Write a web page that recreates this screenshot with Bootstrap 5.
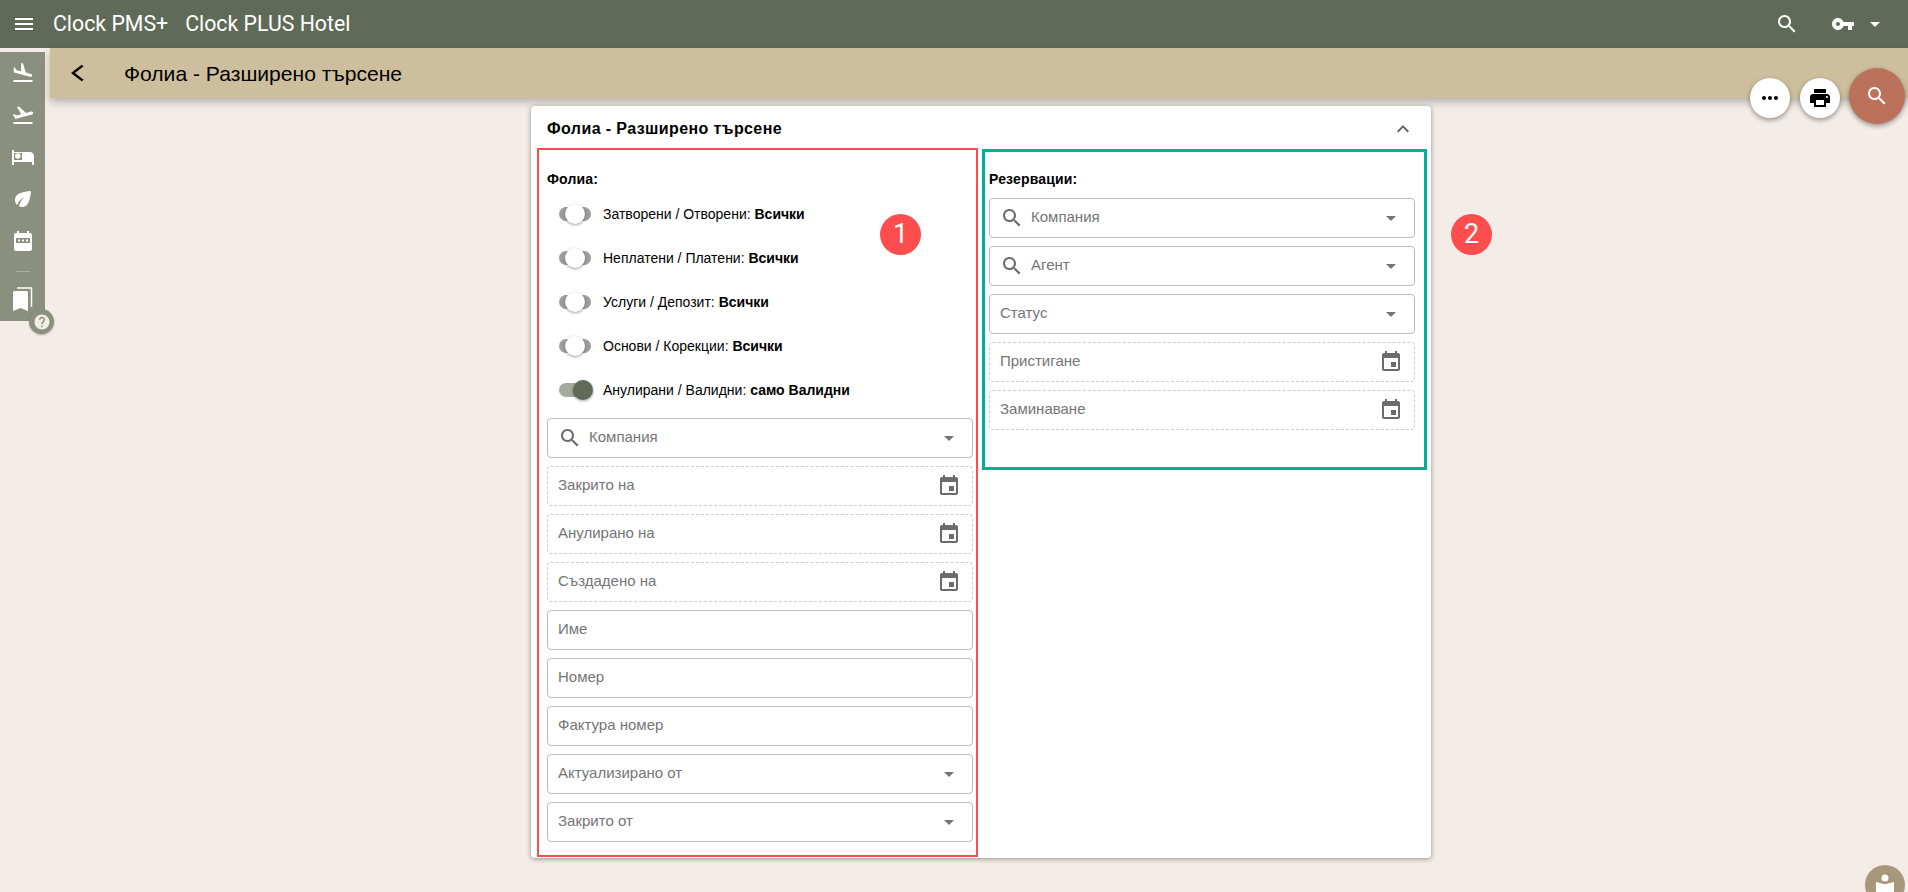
<!DOCTYPE html>
<html lang="bg"><head><meta charset="utf-8"><title>Фолиа - Разширено търсене</title>
<link rel="stylesheet" href="https://cdn.jsdelivr.net/npm/bootstrap@5.3.0/dist/css/bootstrap.min.css">
<style>
html,body{height:100%;overflow:hidden}
body{background:#f4ece6;font-family:"Liberation Sans",Arial,sans-serif;color:#000;position:relative}
svg{display:block;fill:currentColor;flex-shrink:0}
.topbar{height:48px;background:#5f6b58;color:#fff;padding:0 0 0 12px;font-family:Roboto,sans-serif;font-size:21.3px}
.brand-a{margin-left:17px;margin-right:17px}
.top-key{margin-left:32px}
.top-caret{margin-left:15px;margin-right:28px;width:0;height:0;border-left:5px solid transparent;border-right:5px solid transparent;border-top:5px solid #fff}
.workspace{height:844px}
.rail{width:45px;height:269px;margin-top:4px;margin-right:5px;background:#8b8f7e;color:#fff;padding-top:9px;flex-shrink:0}
.rail-item{height:42px}
.rail-sep{width:14px;height:1px;background:#a9ac9e;margin:5px 0 14px}
.rail-mark{margin-left:-2px}
.subbar{height:50px;background:#cdbf9d;box-shadow:0 4px 8px rgba(0,0,0,.25);padding-left:21px;position:relative}
.subbar h1{font-size:21.1px;font-weight:400;margin:2px 0 0 41px;line-height:1}
.subbar svg{margin-right:-1px}
.sheet-wrap{padding:8px 0 0 4px}
.sheet{width:900px;height:752px;border:0;border-radius:4px;box-shadow:0 1px 5px rgba(0,0,0,.4);background:#fff}
.sheet-head{height:42px;padding:4px 16px 0;font-size:16px;font-weight:700;letter-spacing:.4px;color:#000}
.sheet-head svg{color:#666}
.sheet-cols{padding-left:6px;gap:4px}
.zone-red{width:441px;height:709px;border:2px solid #ff4d4d;padding:19px 3px 13px 8px}
.zone-green{width:445px;height:321px;margin-top:1px;border:3px solid #00b294;padding:17px 9px 37px 4px}
.grp-title{font-size:14px;font-weight:700;line-height:20px;letter-spacing:.15px;margin-bottom:3px}
.zone-green .grp-title{margin-bottom:9px}
.sw-row{height:44px;padding-left:12px;font-size:14px}
.sw-track{width:32px;height:14px;border-radius:7px;background:#9e9e9e;margin-right:12px;flex-shrink:0}
.sw-thumb{width:20px;height:20px;border-radius:50%;background:#fff;box-shadow:0 1px 3px rgba(0,0,0,.4);flex-shrink:0}
.sw-on{background:#a4aa9d}
.sw-on .sw-thumb{background:#5f6b58;margin-right:-2px}
.fld-stack{gap:8px;margin-top:6px}
.zone-green .fld-stack{margin-top:0}
.fld{height:40px;border:1px solid #bbb;border-radius:4px;padding:0 11px 2px 10px;font-size:15px;color:#757575;background:#fff}
.fld-dash{border:1px dashed #ccc}
.fld svg{color:#6b6b6b;margin-top:2px}
.fld-icon{margin-right:7px;margin-left:0}
.fld-caret{width:0;height:0;margin-right:7px;margin-top:3px;border-left:5px solid transparent;border-right:5px solid transparent;border-top:5px solid #757575}
.mark-dot{position:absolute;width:41px;height:41px;border-radius:50%;background:#ff4d4d;color:#fff;font-family:Roboto,sans-serif;font-size:27px;top:214px}
.dot-1{left:880px}.dot-2{left:1451px}
.fab{position:absolute;border-radius:50%;background:#fff;color:#000;box-shadow:0 2px 5px rgba(0,0,0,.4);width:40px;height:40px;top:78px}
.fab-more{left:1750px}.fab-print{left:1800px}
.fab-search{left:1849px;top:68px;width:56px;height:56px;background:#bc715a;color:#fff}
.fab-search:hover{background:#bc715a;color:#fff}
.help-dot{position:absolute;left:29px;top:309px;width:25px;height:25px;border-radius:50%;background:#8b8f7e;color:#f4ece6;box-shadow:0 1px 2px rgba(0,0,0,.3)}
.guide-dot{position:absolute;left:1865px;top:865px;width:40px;height:40px;border-radius:50%;background:#a8977b;color:#fff}
</style></head>
<body>
<nav class="topbar navbar d-flex flex-nowrap align-items-center">
  <div class="d-flex align-items-center">
    <svg width="24" height="24" viewBox="0 0 24 24"><path d="M3 18h18v-2H3v2zm0-5h18v-2H3v2zm0-7v2h18V6H3z"/></svg>
    <span class="brand-a">Clock PMS+</span><span>Clock PLUS Hotel</span>
  </div>
  <div class="d-flex align-items-center">
    <svg width="24" height="24" viewBox="0 0 24 24"><path d="M15.5 14h-.79l-.28-.27C15.41 12.59 16 11.11 16 9.5 16 5.91 13.09 3 9.5 3S3 5.91 3 9.5 5.91 16 9.5 16c1.61 0 3.09-.59 4.23-1.57l.27.28v.79l5 4.99L20.49 19l-4.99-5zm-6 0C7.01 14 5 11.99 5 9.5S7.01 5 9.5 5 14 7.01 14 9.5 11.99 14 9.5 14z"/></svg>
    <svg class="top-key" width="24" height="24" viewBox="0 0 24 24"><path d="M12.65 10C11.83 7.67 9.61 6 7 6c-3.31 0-6 2.69-6 6s2.69 6 6 6c2.61 0 4.83-1.67 5.65-4H17v4h4v-4h2v-4H12.65zM7 14c-1.1 0-2-.9-2-2s.9-2 2-2 2 .9 2 2-.9 2-2 2z"/></svg>
    <span class="top-caret"></span>
  </div>
</nav>
<div class="workspace d-flex">
  <aside class="rail d-flex flex-column align-items-center">
    <div class="rail-item"><svg width="24" height="24" viewBox="0 0 24 24"><path d="M2.5 19h19v2h-19zm7.18-5.73l4.35 1.16 5.31 1.42c.8.21 1.62-.26 1.84-1.06.21-.8-.26-1.62-1.06-1.84l-5.31-1.42-2.76-9.02L10.12 2v8.28L5.15 8.95l-.93-2.32-1.45-.39v5.17l1.6.43 5.31 1.43z"/></svg></div>
    <div class="rail-item"><svg width="24" height="24" viewBox="0 0 24 24"><path d="M2.5 19h19v2h-19zm19.57-9.36c-.21-.8-1.04-1.28-1.84-1.06L14.92 10l-6.9-6.43-1.93.51 4.14 7.17-4.97 1.33-1.97-1.54-1.45.39 1.82 3.16.77 1.33 1.6-.43 5.31-1.42 4.35-1.16L21 11.49c.81-.23 1.28-1.05 1.07-1.85z"/></svg></div>
    <div class="rail-item"><svg width="24" height="24" viewBox="0 0 24 24"><path fill-rule="evenodd" d="M1 5h2v2h16c2.210 0 4 1.790 4 4v9h-2v-3H3v3H1zM3 8V15h8V8z"/><circle cx="6.800" cy="11" r="2.800"/></svg></div>
    <div class="rail-item"><svg width="24" height="24" viewBox="0 0 24 24"><path d="M6.05 8.05c-2.73 2.73-2.73 7.15-.02 9.88 1.47-3.4 4.09-6.24 7.36-7.93-2.77 2.34-4.71 5.61-5.39 9.32 2.6 1.23 5.8.78 7.95-1.37C19.43 14.47 20 4 20 4S9.53 4.57 6.05 8.05z"/></svg></div>
    <div class="rail-item" style="height:37px"><svg width="24" height="24" viewBox="0 0 24 24"><path d="M19 4h-1V2h-2v2H8V2H6v2H5c-1.11 0-1.99.9-1.99 2L3 20c0 1.1.89 2 2 2h14c1.1 0 2-.9 2-2V6c0-1.1-.9-2-2-2z"/><rect x="5" y="9" width="14" height="5" fill="#8b8f7e"/><path fill="#fff" d="M7 10.500h2v2H7zm4 0h2v2h-2zm4 0h2v2h-2z"/></svg></div>
    <div class="rail-sep"></div>
    <svg class="rail-mark" width="24" height="26" viewBox="0 0 24 26"><path d="M3 6.5c0-.8.7-1.500 1.500-1.500h12c.8 0 1.500.7 1.500 1.500V25l-7.500-3L3 25z"/><path d="M7 2h14.500v19" fill="none" stroke="#fff" stroke-width="1.500"/></svg>
  </aside>
  <div class="flex-grow-1">
    <header class="subbar d-flex align-items-center">
      <svg width="13" height="20" viewBox="0 0 12 24" preserveAspectRatio="none"><path d="M11.670 3.870L9.900 2.100 0 12l9.900 9.900 1.770-1.770L3.540 12z"/></svg>
      <h1>Фолиа - Разширено търсене</h1>
    </header>
    <div class="sheet-wrap d-flex justify-content-center">
      <section class="card sheet">
        <div class="sheet-head d-flex align-items-center justify-content-between">
          <span>Фолиа - Разширено търсене</span>
          <svg width="24" height="24" viewBox="0 0 24 24"><path d="M12 8l-6 6 1.410 1.410L12 10.830l4.590 4.580L18 14z"/></svg>
        </div>
        <div class="sheet-cols d-flex align-items-start">
          <div class="zone-red">
            <div class="grp-title">Фолиа:</div>
            <div class="sw-row d-flex align-items-center"><span class="sw-track d-flex align-items-center justify-content-center"><span class="sw-thumb"></span></span><span>Затворени / Отворени: <b>Всички</b></span></div>
            <div class="sw-row d-flex align-items-center"><span class="sw-track d-flex align-items-center justify-content-center"><span class="sw-thumb"></span></span><span>Неплатени / Платени: <b>Всички</b></span></div>
            <div class="sw-row d-flex align-items-center"><span class="sw-track d-flex align-items-center justify-content-center"><span class="sw-thumb"></span></span><span>Услуги / Депозит: <b>Всички</b></span></div>
            <div class="sw-row d-flex align-items-center"><span class="sw-track d-flex align-items-center justify-content-center"><span class="sw-thumb"></span></span><span>Основи / Корекции: <b>Всички</b></span></div>
            <div class="sw-row d-flex align-items-center"><span class="sw-track sw-on d-flex align-items-center justify-content-end"><span class="sw-thumb"></span></span><span>Анулирани / Валидни: <b>само Валидни</b></span></div>
            <div class="fld-stack d-flex flex-column">
              <div class="fld d-flex align-items-center"><svg class="fld-icon" width="24" height="24" viewBox="0 0 24 24"><path d="M15.500 14h-.79l-.28-.27C15.410 12.590 16 11.110 16 9.500 16 5.910 13.090 3 9.500 3S3 5.910 3 9.500 5.910 16 9.500 16c1.610 0 3.090-.59 4.230-1.570l.27.28v.79l5 4.990L20.490 19l-4.990-5zm-6 0C7.010 14 5 11.990 5 9.500S7.010 5 9.500 5 14 7.010 14 9.500 11.990 14 9.500 14z"/></svg><span class="flex-grow-1">Компания</span><span class="fld-caret"></span></div>
              <div class="fld fld-dash d-flex align-items-center"><span class="flex-grow-1">Закрито на</span><svg width="24" height="24" viewBox="0 0 24 24"><path d="M17 12h-5v5h5v-5zM16 1v2H8V1H6v2H5c-1.110 0-1.990.9-1.990 2L3 19c0 1.100.89 2 2 2h14c1.100 0 2-.9 2-2V5c0-1.100-.9-2-2-2h-1V1h-2zm3 18H5V8h14v11z"/></svg></div>
              <div class="fld fld-dash d-flex align-items-center"><span class="flex-grow-1">Анулирано на</span><svg width="24" height="24" viewBox="0 0 24 24"><path d="M17 12h-5v5h5v-5zM16 1v2H8V1H6v2H5c-1.110 0-1.990.9-1.990 2L3 19c0 1.100.89 2 2 2h14c1.100 0 2-.9 2-2V5c0-1.100-.9-2-2-2h-1V1h-2zm3 18H5V8h14v11z"/></svg></div>
              <div class="fld fld-dash d-flex align-items-center"><span class="flex-grow-1">Създадено на</span><svg width="24" height="24" viewBox="0 0 24 24"><path d="M17 12h-5v5h5v-5zM16 1v2H8V1H6v2H5c-1.110 0-1.990.9-1.990 2L3 19c0 1.100.89 2 2 2h14c1.100 0 2-.9 2-2V5c0-1.100-.9-2-2-2h-1V1h-2zm3 18H5V8h14v11z"/></svg></div>
              <div class="fld d-flex align-items-center"><span>Име</span></div>
              <div class="fld d-flex align-items-center"><span>Номер</span></div>
              <div class="fld d-flex align-items-center"><span>Фактура номер</span></div>
              <div class="fld d-flex align-items-center"><span class="flex-grow-1">Актуализирано от</span><span class="fld-caret"></span></div>
              <div class="fld d-flex align-items-center"><span class="flex-grow-1">Закрито от</span><span class="fld-caret"></span></div>
            </div>
          </div>
          <div class="zone-green">
            <div class="grp-title">Резервации:</div>
            <div class="fld-stack d-flex flex-column">
              <div class="fld d-flex align-items-center"><svg class="fld-icon" width="24" height="24" viewBox="0 0 24 24"><path d="M15.500 14h-.79l-.28-.27C15.410 12.590 16 11.110 16 9.500 16 5.910 13.090 3 9.500 3S3 5.910 3 9.500 5.910 16 9.500 16c1.610 0 3.090-.59 4.230-1.570l.27.28v.79l5 4.990L20.490 19l-4.990-5zm-6 0C7.010 14 5 11.990 5 9.500S7.010 5 9.500 5 14 7.010 14 9.500 11.990 14 9.500 14z"/></svg><span class="flex-grow-1">Компания</span><span class="fld-caret"></span></div>
              <div class="fld d-flex align-items-center"><svg class="fld-icon" width="24" height="24" viewBox="0 0 24 24"><path d="M15.500 14h-.79l-.28-.27C15.410 12.590 16 11.110 16 9.500 16 5.910 13.090 3 9.500 3S3 5.910 3 9.500 5.910 16 9.500 16c1.610 0 3.090-.59 4.230-1.570l.27.28v.79l5 4.990L20.490 19l-4.990-5zm-6 0C7.010 14 5 11.990 5 9.500S7.010 5 9.500 5 14 7.010 14 9.500 11.990 14 9.500 14z"/></svg><span class="flex-grow-1">Агент</span><span class="fld-caret"></span></div>
              <div class="fld d-flex align-items-center"><span class="flex-grow-1">Статус</span><span class="fld-caret"></span></div>
              <div class="fld fld-dash d-flex align-items-center"><span class="flex-grow-1">Пристигане</span><svg width="24" height="24" viewBox="0 0 24 24"><path d="M17 12h-5v5h5v-5zM16 1v2H8V1H6v2H5c-1.110 0-1.990.9-1.990 2L3 19c0 1.100.89 2 2 2h14c1.100 0 2-.9 2-2V5c0-1.100-.9-2-2-2h-1V1h-2zm3 18H5V8h14v11z"/></svg></div>
              <div class="fld fld-dash d-flex align-items-center"><span class="flex-grow-1">Заминаване</span><svg width="24" height="24" viewBox="0 0 24 24"><path d="M17 12h-5v5h5v-5zM16 1v2H8V1H6v2H5c-1.110 0-1.990.9-1.990 2L3 19c0 1.100.89 2 2 2h14c1.100 0 2-.9 2-2V5c0-1.100-.9-2-2-2h-1V1h-2zm3 18H5V8h14v11z"/></svg></div>
            </div>
          </div>
        </div>
      </section>
    </div>
  </div>
</div>
<span class="mark-dot dot-1 d-flex align-items-center justify-content-center">1</span>
<span class="mark-dot dot-2 d-flex align-items-center justify-content-center">2</span>
<span class="help-dot d-flex align-items-center justify-content-center"><svg width="18" height="18" viewBox="0 0 24 24"><path d="M12 2C6.480 2 2 6.480 2 12s4.480 10 10 10 10-4.480 10-10S17.520 2 12 2zm1 17h-2v-2h2v2zm2.070-7.750l-.9.92C13.450 12.900 13 13.500 13 15h-2v-.5c0-1.100.45-2.100 1.170-2.830l1.240-1.260c.37-.36.59-.86.59-1.410 0-1.100-.9-2-2-2s-2 .9-2 2H8c0-2.210 1.790-4 4-4s4 1.790 4 4c0 .88-.36 1.680-.93 2.250z"/></svg></span>
<button class="fab fab-more btn p-0 d-flex align-items-center justify-content-center"><svg width="24" height="24" viewBox="0 0 24 24"><path d="M6 10c-1.100 0-2 .9-2 2s.9 2 2 2 2-.9 2-2-.9-2-2-2zm12 0c-1.100 0-2 .9-2 2s.9 2 2 2 2-.9 2-2-.9-2-2-2zm-6 0c-1.100 0-2 .9-2 2s.9 2 2 2 2-.9 2-2-.9-2-2-2z"/></svg></button>
<button class="fab fab-print btn p-0 d-flex align-items-center justify-content-center"><svg width="24" height="24" viewBox="0 0 24 24"><path d="M19 8H5c-1.660 0-3 1.340-3 3v6h4v4h12v-4h4v-6c0-1.660-1.340-3-3-3zm-3 11H8v-5h8v5zm3-7c-.55 0-1-.45-1-1s.45-1 1-1 1 .45 1 1-.45 1-1 1zm-1-9H6v4h12V3z"/></svg></button>
<button class="fab fab-search btn p-0 d-flex align-items-center justify-content-center"><svg width="24" height="24" viewBox="0 0 24 24"><path d="M15.500 14h-.79l-.28-.27C15.410 12.590 16 11.110 16 9.500 16 5.910 13.090 3 9.500 3S3 5.910 3 9.500 5.910 16 9.500 16c1.610 0 3.090-.59 4.230-1.570l.27.28v.79l5 4.990L20.490 19l-4.990-5zm-6 0C7.010 14 5 11.990 5 9.500S7.010 5 9.500 5 14 7.010 14 9.500 11.990 14 9.500 14z"/></svg></button>
<span class="guide-dot"><svg width="40" height="40" viewBox="0 0 40 40"><circle cx="20" cy="13" r="3.500"/><path d="M11 17l6 1.500q3 1.500 6 0l6-1.500v22H11z"/></svg></span>
<script src="https://cdn.jsdelivr.net/npm/bootstrap@5.3.0/dist/js/bootstrap.bundle.min.js"></script>
</body></html>
